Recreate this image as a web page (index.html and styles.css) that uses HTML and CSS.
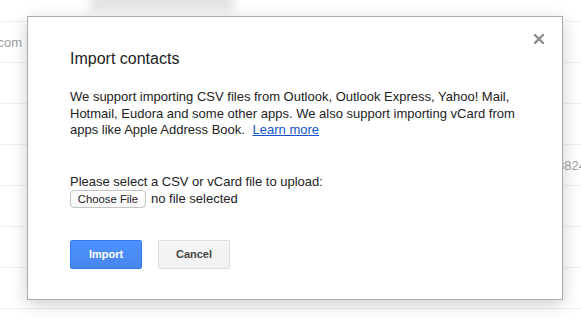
FILE: index.html
```html
<!DOCTYPE html>
<html lang="en">
<head>
    <meta charset="UTF-8">
    <meta name="viewport" content="width=device-width, initial-scale=1.0">
    <title>Import contacts</title>
    <link rel="stylesheet" href="styles.css">
</head>
<body>
    <div class="toolbar-shade"></div>

    <div class="contact-list">
        <div class="row row-first"></div>
        <div class="row"><span class="email">someone@gmail.com</span></div>
        <div class="row"></div>
        <div class="row"></div>
        <div class="row"><span class="phone">(650) 555-8824</span></div>
        <div class="row"></div>
        <div class="row"></div>
        <div class="row"></div>
    </div>

    <div class="dialog">
        <button class="close" type="button" aria-label="Close">
            <svg width="10" height="10" viewBox="0 0 10 10">
                <path d="M1 1 L9 9 M9 1 L1 9" stroke="#8e8e8e" stroke-width="2.4" stroke-linecap="square"/>
            </svg>
        </button>

        <h2 class="dialog-title">Import contacts</h2>

        <p class="dialog-text">
            We support importing CSV files from Outlook, Outlook Express, Yahoo! Mail,
            Hotmail, Eudora and some other apps. We also support importing vCard from
            apps like Apple Address Book. <a href="#" class="learn">Learn more</a>
        </p>

        <form class="upload">
            <label class="upload-label">Please select a CSV or vCard file to upload:</label>
            <div class="file-row">
                <button type="button" class="file-btn">Choose File</button>
                <span class="file-name">no file selected</span>
            </div>

            <div class="actions">
                <button type="submit" class="btn btn-primary">Import</button>
                <button type="button" class="btn">Cancel</button>
            </div>
        </form>
    </div>
</body>
</html>
```

FILE: styles.css
```css
* {
    box-sizing: border-box;
    margin: 0;
    padding: 0;
}

body {
    width: 581px;
    height: 319px;
    overflow: hidden;
    background-color: #fff;
    color: #222;
    font-family: 'Liberation Sans', Arial, sans-serif;
    font-size: 13px;
    position: relative;
}

/* page behind the dialog */
.toolbar-shade {
    position: absolute;
    left: 90px;
    top: -8px;
    width: 144px;
    height: 19px;
    background-color: #e4e4e4;
    filter: blur(5px);
}

.contact-list {
    display: flex;
    flex-direction: column;
}

.row {
    height: 41px;
    border-bottom: 1px solid #f0f0f0;
    display: flex;
    align-items: center;
    justify-content: space-between;
    color: #a0a0a0;
    font-size: 13px;
    white-space: nowrap;
    overflow: hidden;
}

.row-first {
    height: 22px;
}

.email {
    width: 22px;
    overflow: hidden;
    display: flex;
    justify-content: flex-end;
}

.phone {
    margin-left: auto;
    margin-right: -5px;
}

/* dialog */
.dialog {
    position: absolute;
    left: 27px;
    top: 16px;
    width: 536px;
    height: 284px;
    padding: 30px 42px;
    background-color: #fff;
    border: 1px solid #acacac;
    box-shadow: 0 4px 16px rgba(0, 0, 0, 0.2);
}

.close {
    position: absolute;
    top: 17px;
    right: 18px;
    width: 10px;
    height: 10px;
    border: none;
    background: none;
    cursor: pointer;
    display: flex;
}

.dialog-title {
    font-size: 16px;
    font-weight: normal;
    line-height: 24px;
    color: #222;
}

.dialog-text {
    margin-top: 18px;
    line-height: 16.6px;
    color: #222;
}

.learn {
    margin-left: 4px;
    color: #15c;
}

.upload {
    margin-top: 35px;
}

.upload-label {
    display: block;
    line-height: 16px;
}

.file-row {
    display: flex;
    align-items: center;
    gap: 5px;
}

.file-btn {
    height: 18px;
    width: 76px;
    font-family: 'Liberation Sans', Arial, sans-serif;
    font-size: 11.3px;
    color: #222;
    background: linear-gradient(#fff, #f6f6f6);
    border: 1px solid #c4c4c4;
    border-radius: 4px;
}

.file-name {
    line-height: 18px;
}

.actions {
    display: flex;
    gap: 16px;
    margin-top: 32px;
}

.btn {
    width: 72px;
    height: 29px;
    font-family: 'Liberation Sans', Arial, sans-serif;
    font-size: 11px;
    font-weight: bold;
    color: #444;
    background: linear-gradient(#f5f5f5, #f1f1f1);
    border: 1px solid #dcdcdc;
    border-radius: 2px;
    cursor: pointer;
}

.btn-primary {
    color: #fff;
    background: linear-gradient(#4d90fe, #4787ed);
    border-color: #3079ed;
}
```
